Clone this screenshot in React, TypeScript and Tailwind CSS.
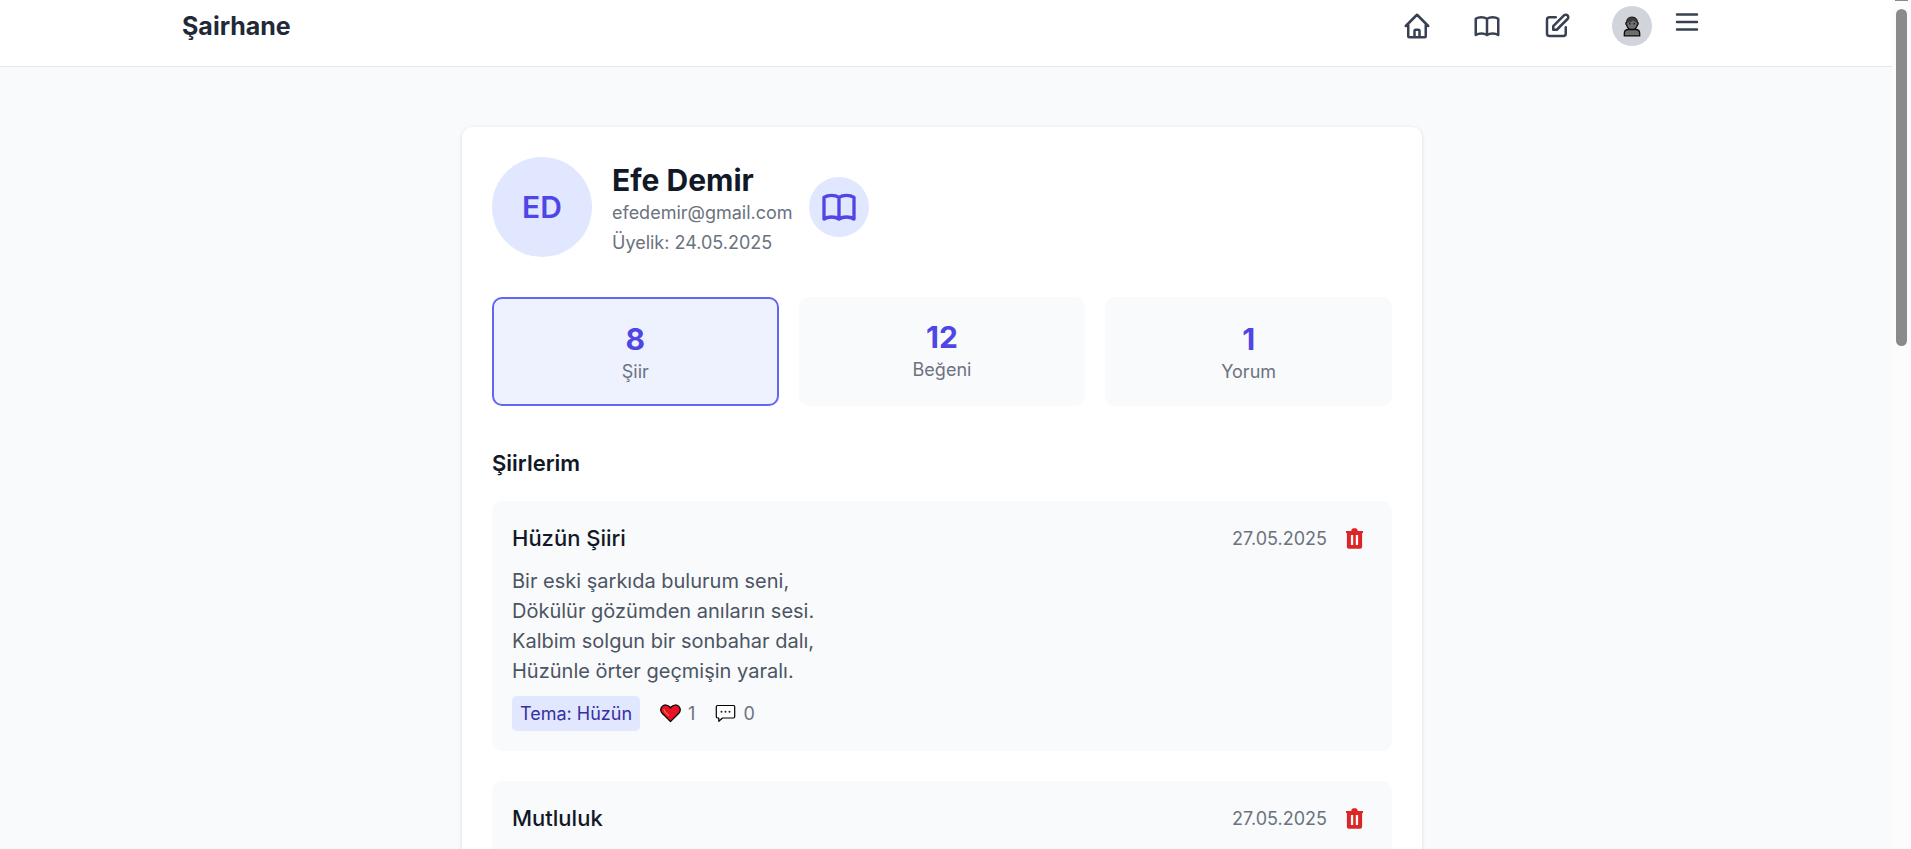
import React from "react";

const HOME =
  "M3 12l2-2m0 0l7-7 7 7M5 10v10a1 1 0 001 1h3m10-11l2 2m-2-2v10a1 1 0 01-1 1h-3m-6 0a1 1 0 001-1v-4a1 1 0 011-1h2a1 1 0 011 1v4a1 1 0 001 1m-6 0h6";
const BOOK =
  "M12 6.253v13m0-13C10.832 5.477 9.246 5 7.5 5S4.168 5.477 3 6.253v13C4.168 18.477 5.754 18 7.5 18s3.332.477 4.5 1.253m0-13C13.168 5.477 14.754 5 16.5 5c1.747 0 3.332.477 4.5 1.253v13C19.832 18.477 18.247 18 16.5 18c-1.746 0-3.332.477-4.5 1.253";
const EDIT =
  "M11 5H6a2 2 0 00-2 2v11a2 2 0 002 2h11a2 2 0 002-2v-5m-1.414-9.414a2 2 0 112.828 2.828L11.828 15H9v-2.828l8.586-8.586z";
const MENU = "M4 6h16M4 12h16M4 18h16";

function LineIcon({ d, className }: { d: string; className: string }) {
  return (
    <svg viewBox="0 0 24 24" fill="none" stroke="currentColor" strokeWidth={2} strokeLinecap="round" strokeLinejoin="round" className={className} aria-hidden="true">
      <path d={d} />
    </svg>
  );
}

function PersonIcon() {
  return (
    <svg viewBox="0 0 18 21" className="h-[21px] w-[18px]" aria-hidden="true">
      <path d="M1.3 19.900v-2.400c0-2.600 1.600-4 4-4h7.400c2.400 0 4 1.400 4 4v2.400z" fill="#6e6e6e" stroke="#0c0c0c" strokeWidth="1.3" />
      <path d="M9 1.200c-3.400 0-5.300 2.300-5.300 5-1.200.3-1.200 2.500 0 2.900.6 2.600 2.700 4.400 5.300 4.400s4.700-1.800 5.300-4.400c1.200-.4 1.200-2.600 0-2.900 0-2.700-1.900-5-5.300-5z" fill="#6e6e6e" stroke="#0c0c0c" strokeWidth="1.3" />
      <path d="M4 6.500C4 3 6 1.500 9 1.500s5 1.500 5 4.500c-2 0-3-.7-3.800-1.800C8.800 5.800 6.600 6.600 4 6.500z" fill="#3c3c3c" />
      <circle cx="6.800" cy="7.800" r="0.800" fill="#0c0c0c" />
      <circle cx="11.200" cy="7.800" r="0.800" fill="#0c0c0c" />
    </svg>
  );
}

function HeartIcon() {
  return (
    <svg viewBox="0 0 21 19" className="h-[19px] w-[21px]" aria-hidden="true">
      <path d="M10.500 17.600L2.200 9.300C.2 7.200.3 4.200 2.200 2.400c2-1.900 5.100-1.800 7 .1l1.300 1.300 1.300-1.300c1.900-1.900 5-2 7-.1 1.900 1.800 2 4.800 0 6.900z" fill="#e81224" stroke="#000" strokeWidth="1.300" strokeLinejoin="round" />
      <path d="M4 5.300c.3 1.800 2.300 4.300 4.600 6" fill="none" stroke="#f8604a" strokeWidth="1.300" strokeLinecap="round" />
    </svg>
  );
}

function CommentIcon() {
  return (
    <svg viewBox="0 0 21 19" className="h-[19px] w-[21px]" aria-hidden="true">
      <path d="M2.500 1.500h16c.7 0 1.200.5 1.200 1.200v10.100c0 .7-.5 1.200-1.200 1.200H7.500l-3.700 3.300V14H2.500c-.7 0-1.200-.5-1.200-1.200V2.700c0-.7.5-1.200 1.200-1.200z" fill="#fff" stroke="#000" strokeWidth="1.200" strokeLinejoin="round" />
      <circle cx="6.500" cy="7.700" r="1" fill="#222" />
      <circle cx="10.500" cy="7.700" r="1" fill="#222" />
      <circle cx="14.500" cy="7.700" r="1" fill="#222" />
    </svg>
  );
}

function TrashIcon() {
  return (
    <svg viewBox="0 0 25 25" className="size-[25px]" aria-hidden="true">
      <path
        fillRule="evenodd"
        fill="currentColor"
        d="M9.500 4c.3-1 1-1.700 2-1.700h2c1 0 1.700.7 2 1.700l.3.900h5.200v2.200h-.9v13.700c0 1.200-.8 2-2 2H6.900c-1.200 0-2-.8-2-2V7.100H4V4.900h5.200zM8.900 9.100v9.900h2.300V9.100zm4.900 0v9.900h2.300V9.100z"
      />
    </svg>
  );
}

type PoemProps = { title: string; date: string; children?: React.ReactNode };

function PoemCard({ title, date, children }: PoemProps) {
  return (
    <article className="min-h-[250px] rounded-[10px] bg-[#f9fafb] p-5">
      <div className="flex items-center justify-between">
        <h3 className="text-[22px] leading-[35px] font-medium text-[#111827]">{title}</h3>
        <div className="flex items-center gap-[10px]">
          <time className="text-[18px] leading-[25px] text-[#6b7280]">{date}</time>
          <button type="button" aria-label="Sil" className="p-[5px] text-[#dc2626]">
            <TrashIcon />
          </button>
        </div>
      </div>
      {children}
    </article>
  );
}

export default function App() {
  const label = "text-[18px] leading-[25px] text-[#6b7280]";
  const count = "text-[30px] leading-[40px] font-bold text-[#4f46e5]";
  return (
    <div className="flex h-screen overflow-hidden bg-[#f9fafb] font-['Inter',sans-serif]">
      <div className="min-w-0 flex-1">
        <header className="border-b border-[#e5e7eb] bg-white pr-2 pb-5">
          <div className="mx-auto flex max-w-[1600px] items-start justify-between px-10 pt-[6px]">
            <a href="#" className="text-[25px] leading-[40px] font-bold text-[#1f2937]">Şairhane</a>
            <nav className="flex items-start gap-5 text-[#374151]">
              <div className="flex h-10 items-center gap-10 pr-5">
                <a href="#" aria-label="Ana sayfa"><LineIcon d={HOME} className="size-[30px]" /></a>
                <a href="#" aria-label="Şiirler"><LineIcon d={BOOK} className="size-[30px]" /></a>
                <a href="#" aria-label="Yaz"><LineIcon d={EDIT} className="size-[30px]" /></a>
              </div>
              <a href="#" aria-label="Profil" className="flex size-10 items-center justify-center rounded-full bg-[#d1d5db]">
                <PersonIcon />
              </a>
              <button type="button" aria-label="Menü" className="flex h-8 items-center">
                <LineIcon d={MENU} className="size-[30px]" />
              </button>
            </nav>
          </div>
        </header>

        <main className="pt-[60px] pr-2">
          <section className="mx-auto max-w-[960px] rounded-[10px] bg-white p-[30px] shadow-[0_1px_4px_rgba(0,0,0,0.12)]">
            <div className="flex items-center gap-4">
              <div className="mr-1 flex size-[100px] items-center justify-center rounded-full bg-[#e0e7ff] text-[30px] font-semibold text-[#4f46e5]">ED</div>
              <div>
                <h1 className="text-[30px] leading-[40px] font-bold text-[#111827]">Efe Demir</h1>
                <p className={label}>efedemir@gmail.com</p>
                <p className="mt-[5px] text-[18px] leading-[25px] text-[#6b7280]">Üyelik: 24.05.2025</p>
              </div>
              <button type="button" aria-label="Şiirlerim" className="flex size-[60px] items-center justify-center rounded-full bg-[#e0e7ff] text-[#4f46e5]">
                <LineIcon d={BOOK} className="size-10" />
              </button>
            </div>

            <div className="mt-10 grid grid-cols-3 gap-5 text-center">
              <button type="button" className="rounded-[10px] border-2 border-[#6366f1] bg-[#eef2ff] p-5">
                <div className={count}>8</div>
                <div className={label}>Şiir</div>
              </button>
              <div className="rounded-[10px] bg-[#f9fafb] p-5">
                <div className={count}>12</div>
                <div className={label}>Beğeni</div>
              </div>
              <button type="button" className="rounded-[10px] bg-[#f9fafb] p-5">
                <div className={count}>1</div>
                <div className={label}>Yorum</div>
              </button>
            </div>

            <h2 className="mt-10 mb-5 text-[22px] leading-[35px] font-semibold text-[#111827]">Şiirlerim</h2>

            <div className="flex flex-col gap-[30px]">
              <PoemCard title="Hüzün Şiiri" date="27.05.2025">
                <p className="mt-[10px] text-[20px] leading-[30px] text-[#4b5563]">
                  Bir eski şarkıda bulurum seni,<br />
                  Dökülür gözümden anıların sesi.<br />
                  Kalbim solgun bir sonbahar dalı,<br />
                  Hüzünle örter geçmişin yaralı.
                </p>
                <div className="mt-[10px] flex items-center gap-5 text-[18px] leading-[25px] text-[#6b7280]">
                  <span className="rounded-[5px] bg-[#e0e7ff] px-2 py-[5px] text-[#3730a3]">Tema: Hüzün</span>
                  <span className="flex items-center gap-[7px]"><HeartIcon />1</span>
                  <span className="flex items-center gap-[7px]"><CommentIcon />0</span>
                </div>
              </PoemCard>
              <PoemCard title="Mutluluk" date="27.05.2025" />
            </div>
          </section>
        </main>
      </div>

      <div className="flex w-[19px] flex-col items-center bg-[#fcfcfc]" aria-hidden="true">
        <div className="h-px w-[13px] bg-[#8b8b8b]" />
        <div className="mt-2 h-[337px] w-[11px] rounded-full bg-[#8b8b8b]" />
      </div>
    </div>
  );
}
